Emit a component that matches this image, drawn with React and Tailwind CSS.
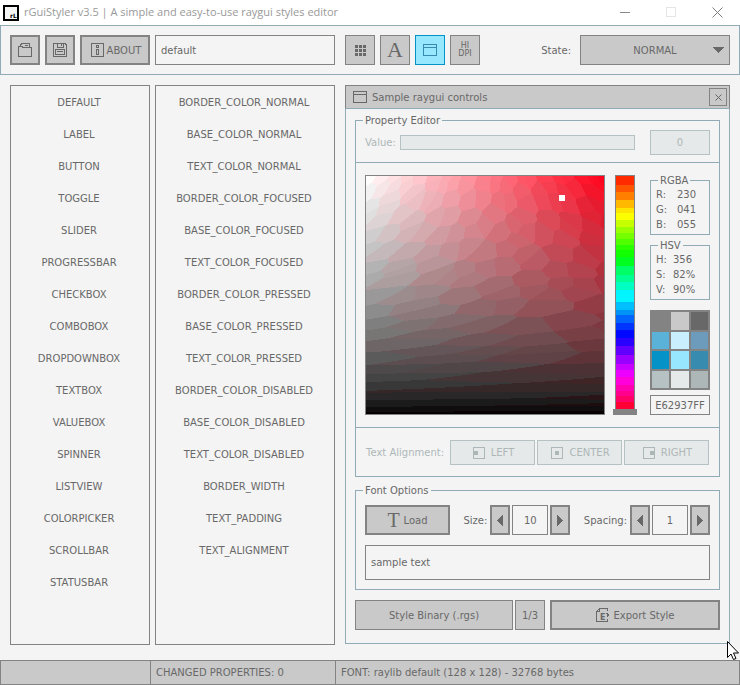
import { useEffect, useRef, useState } from 'react'
import clsx from 'clsx'

const CONTROLS = [
  'DEFAULT', 'LABEL', 'BUTTON', 'TOGGLE', 'SLIDER', 'PROGRESSBAR', 'CHECKBOX', 'COMBOBOX',
  'DROPDOWNBOX', 'TEXTBOX', 'VALUEBOX', 'SPINNER', 'LISTVIEW', 'COLORPICKER', 'SCROLLBAR', 'STATUSBAR',
]

const PROPERTIES = [
  'BORDER_COLOR_NORMAL', 'BASE_COLOR_NORMAL', 'TEXT_COLOR_NORMAL',
  'BORDER_COLOR_FOCUSED', 'BASE_COLOR_FOCUSED', 'TEXT_COLOR_FOCUSED',
  'BORDER_COLOR_PRESSED', 'BASE_COLOR_PRESSED', 'TEXT_COLOR_PRESSED',
  'BORDER_COLOR_DISABLED', 'BASE_COLOR_DISABLED', 'TEXT_COLOR_DISABLED',
  'BORDER_WIDTH', 'TEXT_PADDING', 'TEXT_ALIGNMENT',
]

const PALETTE = [
  '#838383', '#c9c9c9', '#686868',
  '#5bb2d9', '#c9effe', '#6c9bbc',
  '#0492c7', '#97e8ff', '#368baf',
  '#b5c1c2', '#e6e9e9', '#aeb7b8',
]

// [color, relative height]
const HUES = [
  ['#ff2a00', 27], ['#ff5500', 20], ['#ff8000', 25], ['#ffba00', 23], ['#ffe600', 15], ['#fbff00', 22],
  ['#c6ff00', 21], ['#9aff00', 19], ['#75ff00', 17], ['#50ff00', 18], ['#2aff00', 15], ['#11ff00', 21],
  ['#00ff20', 27], ['#00ff66', 27], ['#00ff93', 21], ['#00ffc0', 24], ['#00f5ff', 36], ['#00bfff', 24],
  ['#0093f5', 15], ['#0065ff', 24], ['#0035ff', 21], ['#0008ff', 24], ['#2a00ff', 24], ['#6200ff', 27],
  ['#9a00ff', 27], ['#c800ff', 18], ['#ec00ff', 21], ['#ff00dd', 24], ['#ff00b0', 18], ['#ff008c', 15],
  ['#ff0066', 18], ['#ff0035', 35],
]

const button = 'flex items-center justify-center border-[#838383] bg-[#c9c9c9] text-[#686868]'
const field = 'border border-[#838383] bg-[#f4f4f4] text-[#686868] outline-none'
const disabledBox = 'border border-[#b5c1c2] bg-[#e6e9e9] text-[#aeb7b8]'

function Icon({ children, className }) {
  return (
    <svg
      viewBox="0 0 16 16"
      className={clsx('size-4 shrink-0', className)}
      fill="none"
      stroke="currentColor"
      shapeRendering="crispEdges"
      aria-hidden="true"
    >
      {children}
    </svg>
  )
}

const FolderIcon = () => (
  <Icon>
    <path d="M1.5 14.5V4.5H5.5V5.5H14.5V14.5H1.5Z" />
    <path d="M3.5 4V2.5H4.5V1.5H12.5V5M8 3.5H11" />
  </Icon>
)

const SaveIcon = () => (
  <Icon>
    <path d="M1.5 1.5H13.5V2.5H14.5V14.5H1.5Z" />
    <path d="M5.5 1.5V5.5H11.5V1.5M9.5 2V4" />
    <path d="M3.5 12.5V7.5H12.5V12.5ZM5 9.5H11" />
  </Icon>
)

const InfoIcon = () => (
  <Icon>
    <path d="M2.5 1.5H14.5V14.5H2.5Z" />
    <path d="M7.5 3.5H9.5V5.5H7.5ZM7.5 7.5H9.5V12.5H7.5Z" />
  </Icon>
)

const GridIcon = () => (
  <Icon>
    {[3, 7, 11].map((y) => [3, 7, 11].map((x) => (
      <rect key={`${x}-${y}`} x={x} y={y} width="3" height="3" fill="currentColor" stroke="none" />
    )))}
  </Icon>
)

const WindowIcon = () => (
  <Icon>
    <path d="M1.5 2.5H14.5V13.5H1.5ZM1 5.5H15" />
  </Icon>
)

const ExportIcon = () => (
  <Icon>
    <path d="M12.5 4V1.5H4.5L1.5 4.5V14.5H12.5V12M4.5 1.5V4.5H1.5M11.5 5.5V6.5H12.5V7.5H13.5V8.5H12.5V9.5H11.5" />
    <text x="5" y="13" fontSize="8" fontWeight="bold" fill="currentColor" stroke="none">E</text>
  </Icon>
)

function AlignIcon({ x }) {
  return (
    <Icon>
      <path d="M2.5 2.5H13.5V13.5H2.5Z" />
      <rect x={x} y="6" width="4" height="4" fill="currentColor" stroke="none" />
    </Icon>
  )
}

function Arrow({ right }) {
  return (
    <svg viewBox="0 0 6 11" className="h-[11px] w-1.5" fill="currentColor" shapeRendering="crispEdges" aria-hidden="true">
      <path d={right ? 'M0 0L6 5.5L0 11Z' : 'M6 0L0 5.5L6 11Z'} />
    </svg>
  )
}

function Group({ title, className, children }) {
  return (
    <fieldset className={clsx('min-w-0 border border-[#90abb5]', className)}>
      <legend className="ml-[7px] px-0.5 leading-[11px]">{title}</legend>
      {children}
    </fieldset>
  )
}

function ListView({ items, label, className }) {
  return (
    <ul aria-label={label} className={clsx('flex shrink-0 flex-col gap-0.5 border border-[#838383] py-px', className)}>
      {items.map((item) => (
        <li key={item}>
          <button className="h-[30px] w-full pr-0.5 text-center">{item}</button>
        </li>
      ))}
    </ul>
  )
}

function ColorPanel() {
  const ref = useRef(null)

  useEffect(() => {
    const size = 238
    const ctx = ref.current.getContext('2d')
    const image = ctx.createImageData(size, size)
    let state = 7
    const rand = () => {
      state = (state * 16807) % 2147483647
      return state / 2147483647 - 0.5
    }

    // reduced palette: red channel vs. green channel, both 0..255
    const seeds = []
    for (let r = 0; r <= 260; r += 13) {
      for (let g = 0; g <= r; g += 13) {
        const sr = Math.max(0, Math.min(255, r + rand() * 11))
        seeds.push([sr, Math.max(0, Math.min(sr, g + rand() * 11))])
      }
    }

    for (let y = 0; y < size; y++) {
      const v = 1 - y / (size - 1)
      const r = 255 * v ** 0.7
      for (let x = 0; x < size; x++) {
        // darker shades lose saturation
        const s = (x / (size - 1)) * (1 - 0.75 * (1 - v))
        const g = r * (1 - s)
        let best = seeds[0]
        let min = Infinity
        for (const seed of seeds) {
          const d = (seed[0] - r) ** 2 + (seed[1] - g) ** 2
          if (d < min) {
            min = d
            best = seed
          }
        }
        const i = (y * size + x) * 4
        image.data[i] = best[0]
        image.data[i + 1] = best[1]
        image.data[i + 2] = best[1] + (best[0] - best[1]) * 0.1
        image.data[i + 3] = 255
      }
    }
    ctx.putImageData(image, 0, 0)
  }, [])

  return (
    <div className="relative h-60 min-w-0 flex-1 border border-[#838383]">
      <canvas ref={ref} width="238" height="238" className="block h-full w-full" />
      <span className="absolute top-[8%] left-[81%] size-1.5 bg-white" />
    </div>
  )
}

function HueBar() {
  return (
    <div className="relative flex h-60 w-5 shrink-0 flex-col border border-[#838383]">
      {HUES.map(([color, size]) => (
        <div key={color} style={{ backgroundColor: color, flex: size }} />
      ))}
      <span className="absolute -right-[3px] -bottom-px -left-[3px] h-1.5 bg-[#838383]" />
    </div>
  )
}

function Channels({ title, rows, valueClass, className }) {
  return (
    <Group title={title} className={clsx('pt-px pb-0.5', className)}>
      <dl>
        {rows.map(([name, value]) => (
          <div key={name} className="flex pl-[5px] leading-[15px]">
            <dt className={valueClass}>{name}:</dt>
            <dd>{value}</dd>
          </div>
        ))}
      </dl>
    </Group>
  )
}

function Spinner({ id, label, initial }) {
  const [value, setValue] = useState(initial)

  return (
    <div className="flex items-center">
      <label htmlFor={id} className="mr-[3px]">{label}</label>
      <button aria-label={`${label} less`} onClick={() => setValue(value - 1)} className={clsx(button, 'h-[30px] w-5 border-2')}>
        <Arrow />
      </button>
      <input
        id={id}
        value={value}
        onChange={(e) => setValue(Number(e.target.value) || 0)}
        className={clsx(field, 'mx-0.5 h-[30px] w-9 text-center')}
      />
      <button aria-label={`${label} more`} onClick={() => setValue(value + 1)} className={clsx(button, 'h-[30px] w-5 border-2')}>
        <Arrow right />
      </button>
    </div>
  )
}

function TitleBar() {
  return (
    <header className="flex h-[25px] items-center bg-white pl-[3px]">
      <svg viewBox="0 0 16 16" className="size-4 shrink-0" aria-hidden="true">
        <rect x="1" y="1" width="14" height="14" fill="#f4f4f4" stroke="#000" strokeWidth="2" />
        <text x="7" y="13" fontSize="6" fontWeight="bold" fill="#000">rL</text>
      </svg>
      <h1 className="ml-[5px] flex-1 truncate font-['Open_Sans',sans-serif] text-[11px] text-[#999999]">
        rGuiStyler v3.5 | A simple and easy-to-use raygui styles editor
      </h1>
      <button aria-label="Minimize" className="flex h-full w-[46px] items-center justify-center text-[#8a8a8a]">
        <svg viewBox="0 0 11 11" className="size-[11px]" stroke="currentColor" shapeRendering="crispEdges"><path d="M0 5.5H10" /></svg>
      </button>
      <button aria-label="Maximize" className="flex h-full w-[46px] items-center justify-center text-[#e6e6e6]">
        <svg viewBox="0 0 11 11" className="size-[11px]" fill="none" stroke="currentColor" shapeRendering="crispEdges"><path d="M.5 .5H9.5V9.5H.5Z" /></svg>
      </button>
      <button aria-label="Close" className="flex h-full w-[46px] items-center justify-center text-[#7d7d7d]">
        <svg viewBox="0 0 11 11" className="size-[11px]" stroke="currentColor"><path d="M.5 .5L10.5 10.5M10.5 .5L.5 10.5" /></svg>
      </button>
    </header>
  )
}

function Toolbar() {
  const [name, setName] = useState('default')

  return (
    <div className="flex h-[50px] items-center gap-[5px] border border-[#90abb5] px-[9px]">
      <button aria-label="Open" className={clsx(button, 'size-[30px] border-2')}><FolderIcon /></button>
      <button aria-label="Save" className={clsx(button, 'size-[30px] border-2')}><SaveIcon /></button>
      <button className={clsx(button, 'h-[30px] w-[70px] gap-0.5 border-2')}><InfoIcon />ABOUT</button>
      <input
        aria-label="Style name"
        value={name}
        onChange={(e) => setName(e.target.value)}
        className={clsx(field, 'h-[30px] w-[180px] px-[5px]')}
      />
      <div className="ml-[5px] flex gap-[5px]">
        <button aria-label="Controls table" className={clsx(button, 'size-[30px] border')}><GridIcon /></button>
        <button className={clsx(button, "size-[30px] border font-['Liberation_Serif',serif] text-[22px] leading-none")}>A</button>
        <button aria-label="Sample window" className="flex size-[30px] items-center justify-center border border-[#0492c7] bg-[#97e8ff] text-[#368baf]">
          <WindowIcon />
        </button>
        <button aria-label="HI DPI" className={clsx(button, 'size-[30px] flex-col border text-[8px] leading-[8px]')}>
          <span className="block h-2">HI</span>
          <span className="block h-2">DPI</span>
        </button>
      </div>
      <label htmlFor="state" className="mr-1 ml-auto">State:</label>
      <div className="relative">
        <select
          id="state"
          className="block h-[30px] w-[150px] appearance-none border border-[#838383] bg-[#c9c9c9] text-center [text-align-last:center] outline-none"
        >
          <option>NORMAL</option>
          <option>FOCUSED</option>
          <option>PRESSED</option>
          <option>DISABLED</option>
        </select>
        <svg viewBox="0 0 11 6" className="pointer-events-none absolute top-3 right-1.5 h-1.5 w-[11px]" fill="currentColor" shapeRendering="crispEdges" aria-hidden="true">
          <path d="M0 0H11L5.5 6Z" />
        </svg>
      </div>
    </div>
  )
}

function PropertyEditor() {
  return (
    <Group title="Property Editor">
      <div className="flex items-center border-b border-[#90abb5] px-[9px] pt-1 pb-[7px]">
        <label htmlFor="value" className="w-[35px] text-[#aeb7b8]">Value:</label>
        <input
          id="value"
          type="range"
          min="0"
          defaultValue="0"
          disabled
          className={clsx(disabledBox, 'h-[15px] min-w-0 flex-1 appearance-none [&::-webkit-slider-thumb]:w-0 [&::-webkit-slider-thumb]:appearance-none')}
        />
        <input aria-label="Value number" defaultValue="0" disabled className={clsx(disabledBox, 'ml-[15px] h-[25px] w-[60px] text-center')} />
      </div>

      <div className="flex border-b border-[#90abb5] px-[9px] py-3">
        <ColorPanel />
        <div className="mr-[15px] ml-2.5"><HueBar /></div>
        <div className="flex w-[60px] shrink-0 flex-col">
          <Channels title="RGBA" rows={[['R', '230'], ['G', '041'], ['B', '055']]} valueClass="w-[21px]" />
          <Channels title="HSV" rows={[['H', '356'], ['S', '82%'], ['V', '90%']]} valueClass="w-[17px]" className="mt-[5px]" />
          <div className="mt-2.5 grid h-20 grid-cols-3 grid-rows-4 gap-0.5 bg-[#838383] p-0.5">
            {PALETTE.map((color) => (
              <button key={color} aria-label={color} style={{ backgroundColor: color }} />
            ))}
          </div>
          <input aria-label="Hex color" defaultValue="E62937FF" className={clsx(field, 'mt-[5px] h-5 w-full text-center')} />
        </div>
      </div>

      <div className="flex items-center gap-0.5 px-2.5 pt-3 pb-[11px] text-[#aeb7b8]">
        <span className="flex-1 whitespace-nowrap">Text Alignment:</span>
        <button disabled className={clsx(disabledBox, 'flex h-[25px] w-[85px] items-center justify-center gap-1')}>
          <AlignIcon x="3" />LEFT
        </button>
        <button disabled className={clsx(disabledBox, 'flex h-[25px] w-[85px] items-center justify-center gap-1')}>
          <AlignIcon x="6" />CENTER
        </button>
        <button disabled className={clsx(disabledBox, 'flex h-[25px] w-[85px] items-center justify-center gap-1')}>
          <AlignIcon x="9" />RIGHT
        </button>
      </div>
    </Group>
  )
}

function FontOptions() {
  return (
    <Group title="Font Options" className="mt-2">
      <div className="px-[9px] py-[9px]">
        <div className="flex items-center justify-between">
          <button className={clsx(button, 'h-[30px] w-[85px] gap-1 border-2')}>
            <span className="font-['Liberation_Serif',serif] text-[20px] leading-none">T</span>
            Load
          </button>
          <Spinner id="size" label="Size:" initial={10} />
          <Spinner id="spacing" label="Spacing:" initial={1} />
        </div>
        <input aria-label="Sample text" defaultValue="sample text" className={clsx(field, 'mt-2.5 block h-[35px] w-full px-[5px]')} />
      </div>
    </Group>
  )
}

function SampleWindow() {
  return (
    <section className="mb-px ml-[5px] min-w-0 flex-1">
      <div className="flex h-[23px] items-center gap-1 border border-b-0 border-[#838383] bg-[#c9c9c9] pr-0.5 pl-1.5">
        <WindowIcon />
        <h2 className="flex-1">Sample raygui controls</h2>
        <button aria-label="Close window" className={clsx(button, 'size-[18px] border')}>
          <svg viewBox="0 0 7 7" className="size-[7px]" stroke="currentColor"><path d="M.5 .5L6.5 6.5M6.5 .5L.5 6.5" /></svg>
        </button>
      </div>
      <div className="border border-[#90abb5] px-[9px] pt-1.5 pb-[13px]">
        <PropertyEditor />
        <FontOptions />
        <div className="mt-2.5 flex">
          <select
            aria-label="Export format"
            className="h-[30px] min-w-0 flex-1 appearance-none border border-[#838383] bg-[#c9c9c9] text-center [text-align-last:center] outline-none"
          >
            <option>Style Binary (.rgs)</option>
            <option>Style Code (.h)</option>
            <option>Controls Table (.png)</option>
          </select>
          <button className={clsx(button, 'ml-0.5 h-[30px] w-[30px] border')}>1/3</button>
          <button className={clsx(button, 'ml-[5px] h-[30px] w-[170px] gap-0.5 border-2')}><ExportIcon />Export Style</button>
        </div>
      </div>
    </section>
  )
}

export default function App() {
  return (
    <div className="relative flex min-h-screen flex-col bg-[#f4f4f4] font-['DejaVu_Sans',sans-serif] text-[10px] text-[#686868]">
      <TitleBar />
      <Toolbar />
      <main className="flex flex-1 gap-[5px] px-2.5 pt-2.5 pb-[15px]">
        <ListView items={CONTROLS} label="Controls" className="w-[140px]" />
        <ListView items={PROPERTIES} label="Properties" className="w-[180px]" />
        <SampleWindow />
      </main>
      <footer className="flex h-[25px] items-stretch border border-[#838383] bg-[#c9c9c9]">
        <div className="w-[150px] border-r border-[#838383]" />
        <div className="flex w-[185px] items-center border-r border-[#838383] px-[5px]">CHANGED PROPERTIES: 0</div>
        <div className="flex flex-1 items-center px-[5px]">FONT: raylib default (128 x 128) - 32768 bytes</div>
      </footer>
      <svg viewBox="0 0 12 19" className="pointer-events-none absolute right-px bottom-[25px] h-[19px] w-3" aria-hidden="true">
        <path d="M.5 .5V16.5L4 13L6.5 18.5L9 17.5L6.5 12H11.5Z" fill="#fff" stroke="#000" />
      </svg>
    </div>
  )
}
